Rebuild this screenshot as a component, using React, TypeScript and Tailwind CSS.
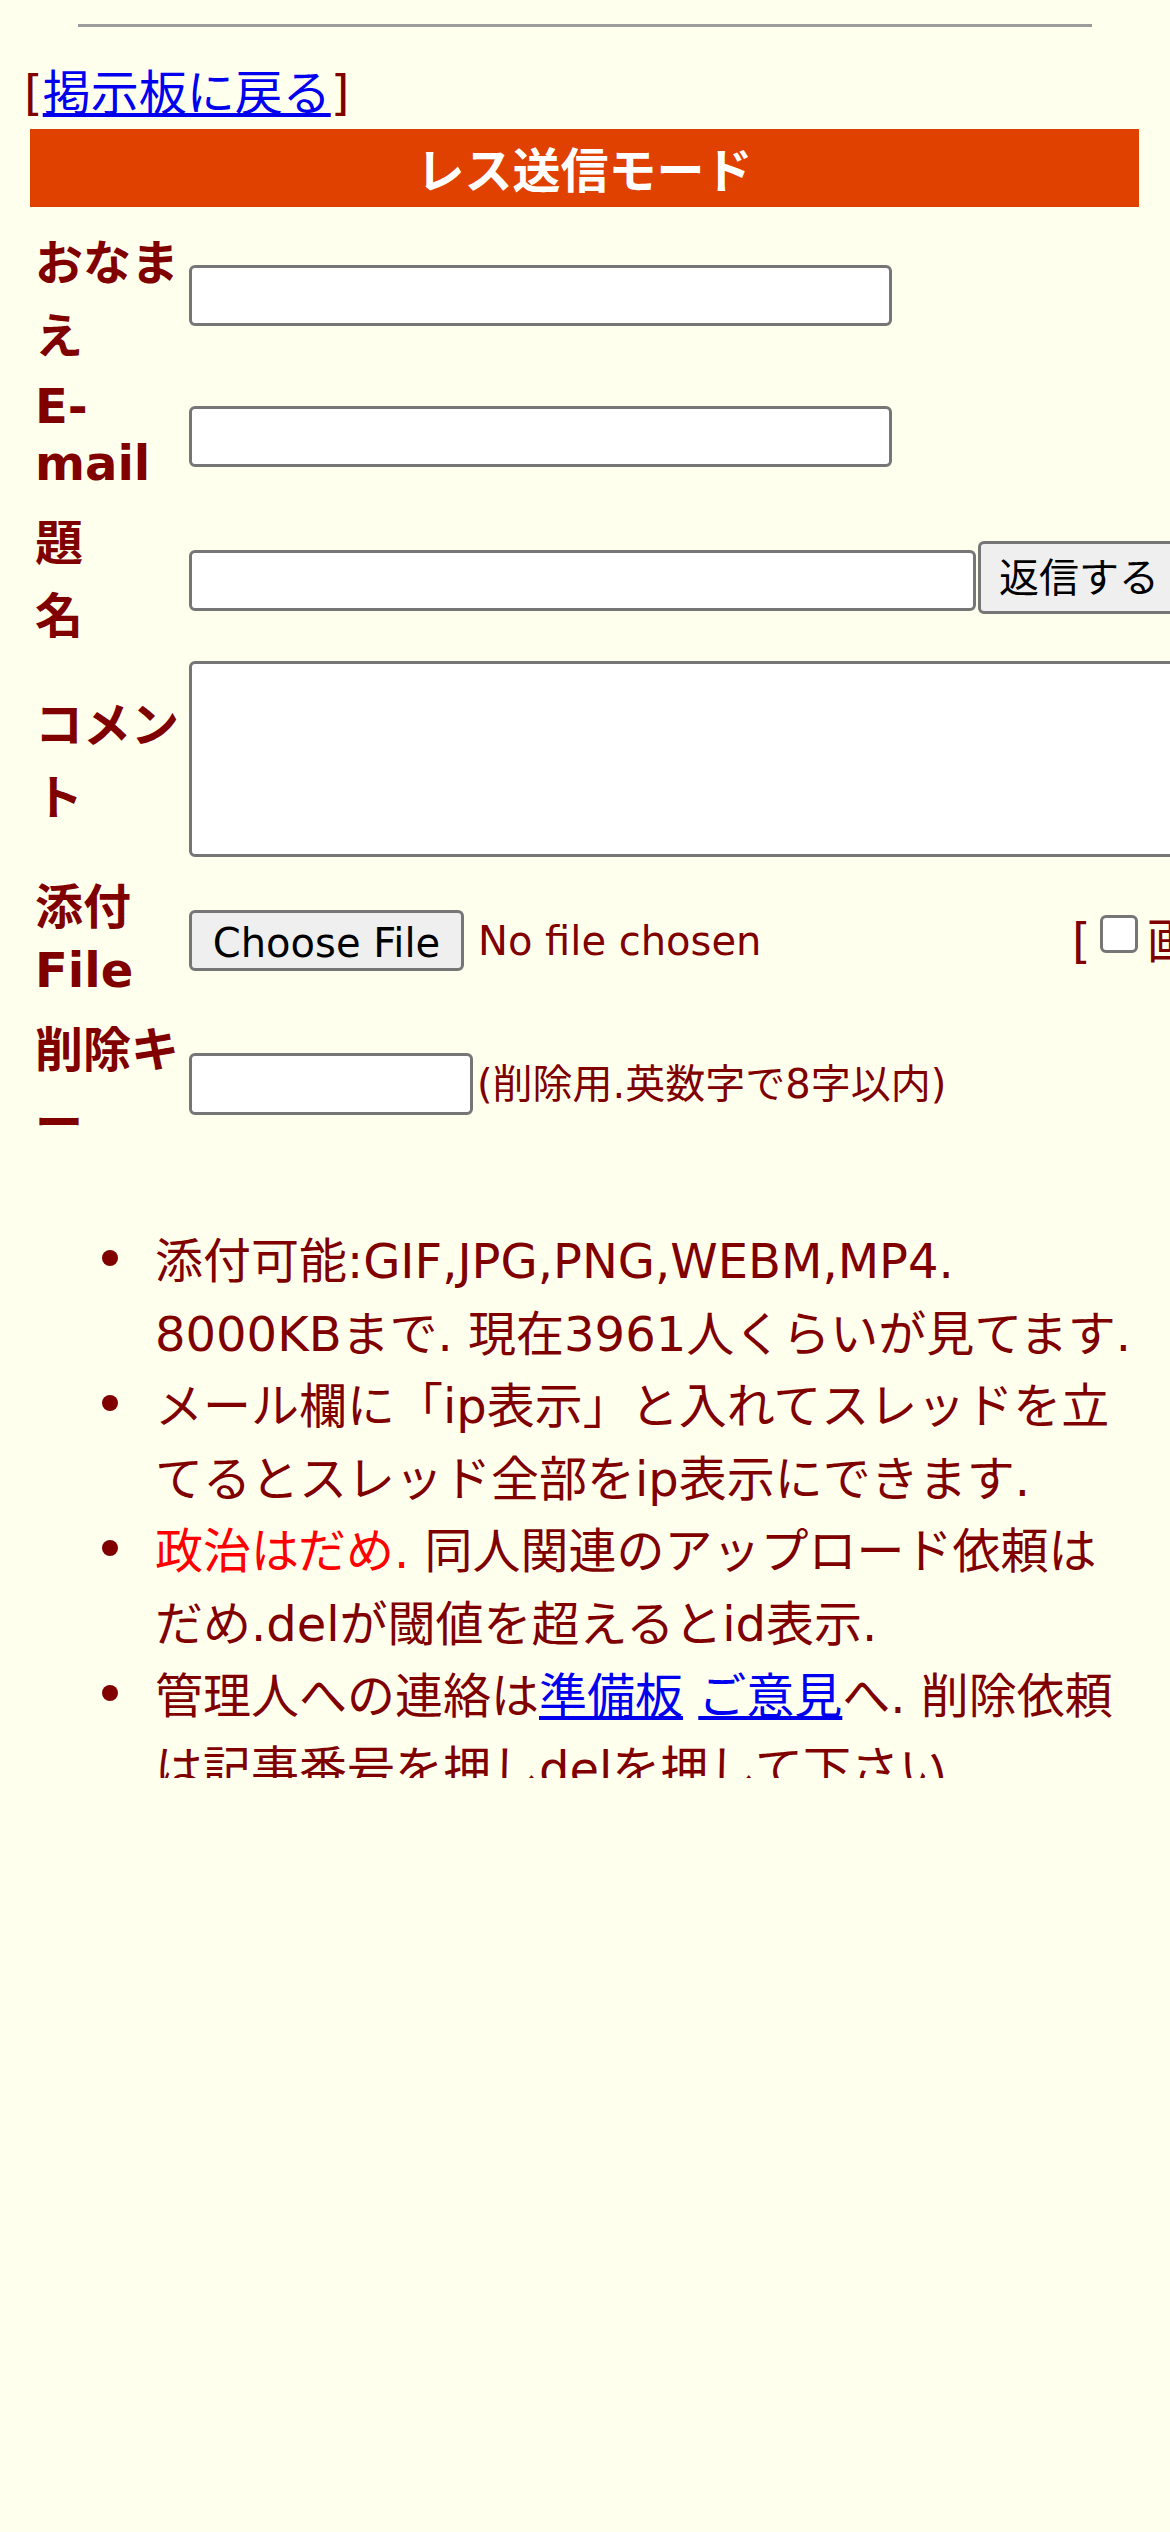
import type { ReactNode } from "react";

const FIELD =
  "block shrink-0 rounded-[6px] border-[3px] border-[#767676] bg-white outline-none";
const BUTTON =
  "shrink-0 rounded-[6px] border-[3px] border-[#767676] bg-[#efefef] text-[40px] text-black whitespace-nowrap";

function Row({
  label,
  children,
  className = "",
}: {
  label: ReactNode;
  children: ReactNode;
  className?: string;
}) {
  return (
    <div className={`flex ${className}`}>
      <div className="w-[189px] shrink-0 whitespace-nowrap pl-[35px] font-bold">
        {label}
      </div>
      {children}
    </div>
  );
}

function Line({ children, h = "cjk" }: { children: ReactNode; h?: "cjk" | "latin" | "short" }) {
  const cls =
    h === "cjk"
      ? "h-[73px] leading-[73px]"
      : h === "short"
        ? "h-[70px] leading-[70px]"
        : "h-[57px] leading-[57px]";
  return <div className={cls}>{children}</div>;
}

function Bullet({ children }: { children: ReactNode }) {
  return (
    <li className="flex">
      <span className="ml-[102px] mt-[25px] h-[16px] w-[16px] shrink-0 rounded-full bg-[#800000]" />
      <div className="ml-[37px] whitespace-nowrap">{children}</div>
    </li>
  );
}

export default function App() {
  return (
    <div className="h-[2532px] w-[1170px] overflow-hidden bg-[#ffffee] font-['DejaVu_Sans','Noto_Sans_CJK_JP',sans-serif] text-[48px] text-[#800000]">
      <div className="h-[1778px] overflow-hidden">
        <div className="mx-[78px] mt-[24px] h-[3px] bg-[#9c9c9c]" />

        <p className="mt-[30px] h-[72px] pl-[24px] leading-[72px]">
          [
          <a href="#" className="text-[#0000ee] underline">
            掲示板に戻る
          </a>
          ]
        </p>

        <div className="ml-[30px] mr-[31px] flex h-[78px] items-center justify-center bg-[#e04000] pt-[5px] font-bold text-white">
          レス送信モード
        </div>

        <form className="mt-[20px]" onSubmit={(e) => e.preventDefault()}>
          <Row
            label={
              <>
                <Line>おなま</Line>
                <Line>え</Line>
              </>
            }
          >
            <input type="text" className={`${FIELD} mt-[38px] h-[61px] w-[703px]`} />
          </Row>

          <Row
            className="mt-[5px]"
            label={
              <>
                <Line h="latin">E-</Line>
                <Line h="latin">mail</Line>
              </>
            }
          >
            <input type="text" className={`${FIELD} mt-[28px] h-[61px] w-[703px]`} />
          </Row>

          <Row
            className="mt-[15px]"
            label={
              <>
                <Line>題</Line>
                <Line>名</Line>
              </>
            }
          >
            <div className="flex shrink-0 items-start">
              <input type="text" className={`${FIELD} mt-[43px] h-[61px] w-[787px]`} />
              <button type="submit" className={`${BUTTON} ml-[2px] mt-[34px] h-[73px] px-[18px]`}>
                返信する
              </button>
            </div>
          </Row>

          <Row
            className="mt-[8px]"
            label={
              <div className="mt-[28px]">
                <Line>コメン</Line>
                <Line>ト</Line>
              </div>
            }
          >
            <textarea className={`${FIELD} h-[196px] w-[1200px] resize-none`} />
          </Row>

          <Row
            className="mt-[15px]"
            label={
              <>
                <Line h="short">添付</Line>
                <Line h="latin">File</Line>
              </>
            }
          >
            <div className="mt-[38px] flex h-[61px] shrink-0 items-center">
              <button type="button" className={`${BUTTON} h-[61px] w-[275px]`}>
                Choose File
              </button>
              <span className="ml-[14px] w-[581px] shrink-0 text-[40px]">No file chosen</span>
              <span className="ml-[13px] shrink-0">[</span>
              <input
                type="checkbox"
                className="ml-[9px] mr-[9px] mt-[5px] h-[38px] w-[38px] shrink-0 appearance-none self-start rounded-[6px] border-[3px] border-[#767676] bg-white"
              />
              <span className="shrink-0 whitespace-nowrap">画像なし]</span>
            </div>
          </Row>

          <Row
            className="mt-[15px]"
            label={
              <>
                <Line>削除キ</Line>
                <Line>ー</Line>
              </>
            }
          >
            <div className="mt-[39px] flex h-[62px] shrink-0 items-center">
              <input type="password" className={`${FIELD} h-[62px] w-[284px]`} />
              <span className="ml-[4px] whitespace-nowrap text-[40px]">
                (削除用.英数字で8字以内)
              </span>
            </div>
          </Row>
        </form>

        <ul className="mt-[65px] leading-[72.5px]">
          <Bullet>
            添付可能:GIF,JPG,PNG,WEBM,MP4.
            <br />
            8000KBまで. 現在3961人くらいが見てます.
          </Bullet>
          <Bullet>
            メール欄に「ip表示」と入れてスレッドを立
            <br />
            てるとスレッド全部をip表示にできます.
          </Bullet>
          <Bullet>
            <span className="text-[#ff0000]">政治はだめ.</span> 同人関連のアップロード依頼は
            <br />
            だめ.delが閾値を超えるとid表示.
          </Bullet>
          <Bullet>
            管理人への連絡は
            <a href="#" className="text-[#0000ee] underline">
              準備板
            </a>{" "}
            <a href="#" className="text-[#0000ee] underline">
              ご意見
            </a>
            へ. 削除依頼
            <br />
            は記事番号を押しdelを押して下さい.
          </Bullet>
        </ul>
      </div>
    </div>
  );
}
